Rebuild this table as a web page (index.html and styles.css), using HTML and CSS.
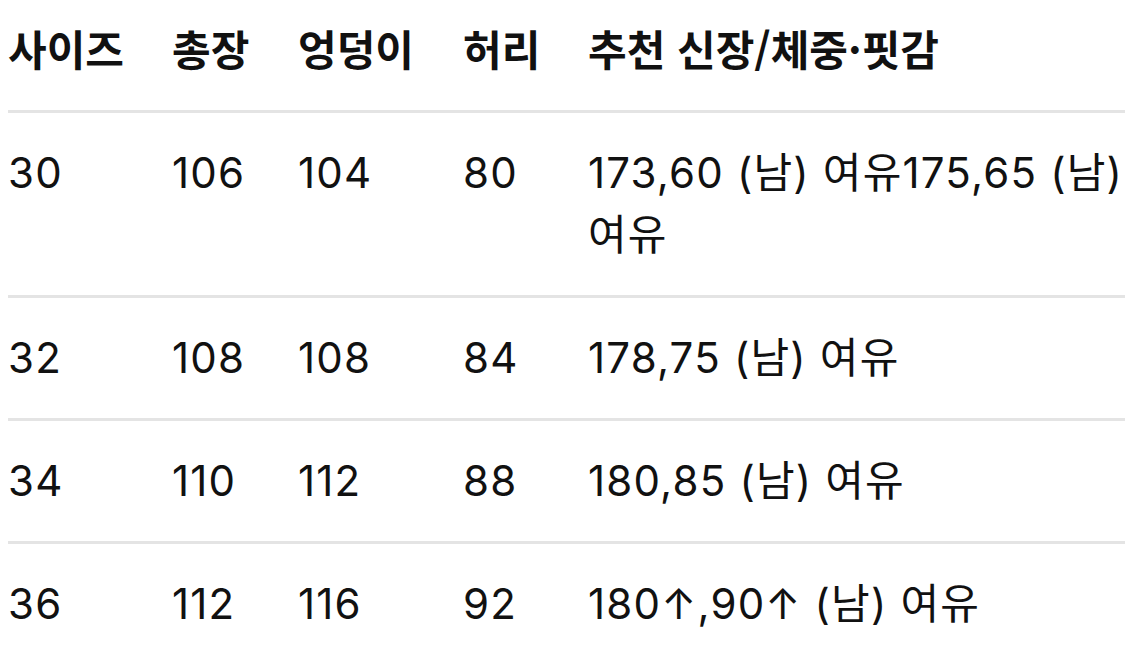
FILE: index.html
```html
<!DOCTYPE html>
<html lang="ko">
<head>
<meta charset="utf-8">
<title>사이즈표</title>
<link rel="stylesheet" href="styles.css">
</head>
<body>
<div class="wrap">
<table class="size-table">
  <colgroup>
    <col class="c-size">
    <col class="c-len">
    <col class="c-hip">
    <col class="c-waist">
    <col class="c-rec">
  </colgroup>
  <thead>
    <tr>
      <th>사이즈</th>
      <th>총장</th>
      <th>엉덩이</th>
      <th>허리</th>
      <th>추천 신장/체중·핏감</th>
    </tr>
  </thead>
  <tbody>
    <tr>
      <td>30</td>
      <td>106</td>
      <td>104</td>
      <td>80</td>
      <td>173,60 (남) 여유175,65 (남) 여유</td>
    </tr>
    <tr>
      <td>32</td>
      <td>108</td>
      <td>108</td>
      <td>84</td>
      <td>178,75 (남) 여유</td>
    </tr>
    <tr>
      <td>34</td>
      <td>110</td>
      <td>112</td>
      <td>88</td>
      <td>180,85 (남) 여유</td>
    </tr>
    <tr>
      <td>36</td>
      <td>112</td>
      <td>116</td>
      <td>92</td>
      <td>180↑,90↑ (남) 여유</td>
    </tr>
  </tbody>
</table>
</div>
</body>
</html>
```

FILE: styles.css
```css
html, body {
  margin: 0;
  padding: 0;
  background: #ffffff;
}

body {
  font-family: Inter, "Noto Sans CJK KR", sans-serif;
  color: #111111;
  overflow: hidden;
}

.wrap {
  padding-left: 8px;
}

.size-table {
  width: 1117px;
  table-layout: fixed;
  border-collapse: collapse;
  font-size: 42px;
  line-height: 62px;
}

.c-size { width: 164px; }
.c-len { width: 126px; }
.c-hip { width: 165px; }
.c-waist { width: 125px; }
.c-rec { width: auto; }

.size-table th,
.size-table td {
  text-align: left;
  vertical-align: top;
  padding: 29px 0;
  border-bottom: 3px solid #e4e4e4;
}

.size-table th {
  font-family: "Noto Sans CJK KR", sans-serif;
  font-weight: 700;
  padding-top: 17px;
  padding-bottom: 31px;
}

.size-table td {
  font-weight: 400;
  letter-spacing: 1.2px;
}
```
